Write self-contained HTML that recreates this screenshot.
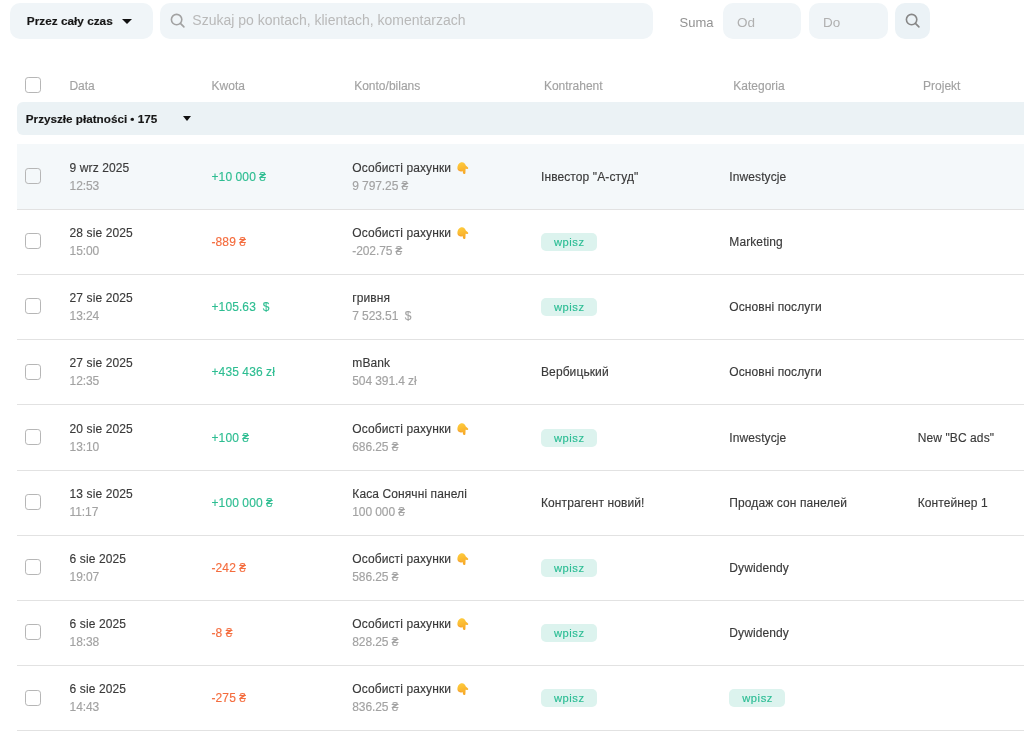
<!DOCTYPE html>
<html><head><meta charset="utf-8">
<style>
html,body{margin:0;padding:0;}
body{width:1024px;height:735px;overflow:hidden;background:#fff;position:relative;font-family:"Liberation Sans",sans-serif;}
#w{position:absolute;left:0;top:0;width:1024px;height:735px;will-change:transform;}
.box{position:absolute;background:#f0f5f8;border-radius:10px;}
.t{position:absolute;white-space:pre;font-size:12px;line-height:14px;color:#3a3a3a;-webkit-text-stroke:0.15px currentColor;letter-spacing:0.1px;}
.s{color:#a2a2a2;letter-spacing:-0.1px;}
.h{color:#a2a2a2;letter-spacing:0;}
.g{color:#2dbd91;}
.r{color:#f46c3d;}
.row{position:absolute;left:17px;width:1100px;}
.sep{position:absolute;left:17px;width:1100px;height:1px;background:#e2e2e2;}
.hl{background:#f4f8fa;}
.cb{position:absolute;left:25px;width:16px;height:16px;box-sizing:border-box;border:1.8px solid #b6b6b6;border-radius:3.2px;background:transparent;}

.chip{position:absolute;height:17.8px;width:56px;box-sizing:border-box;background:#dcf3ee;border-radius:5px;color:#2bbd94;font-size:11.2px;line-height:18.4px;text-align:center;letter-spacing:0.55px;text-indent:0.55px;-webkit-text-stroke:0.15px #2bbd94;}
.hand{position:absolute;margin-left:5.6px;margin-top:1.2px;}
.tri{position:absolute;width:0;height:0;border-left:5px solid transparent;border-right:5px solid transparent;border-top:5px solid #111;}
</style></head><body><svg width="0" height="0" style="position:absolute"><defs><linearGradient id="hg" x1="0" y1="0" x2="0.3" y2="1"><stop offset="0" stop-color="#ffcf3f"/><stop offset="1" stop-color="#f7a928"/></linearGradient></defs></svg><div id="w">
<div class="box" style="left:10px;top:3.2px;width:143px;height:35.6px"></div>
<div class="t" style="left:26.8px;top:14.4px;font-size:11.8px;font-weight:bold;color:#161616;letter-spacing:0">Przez cały czas</div>
<div class="tri" style="left:122.2px;top:19px"></div>
<div class="box" style="left:160px;top:3.2px;width:493px;height:35.6px"></div>
<svg style="position:absolute;left:169.5px;top:13px" width="16" height="16" viewBox="0 0 16 16"><circle cx="6.6" cy="6.6" r="5.2" fill="none" stroke="#a2a2a2" stroke-width="1.6"/><path d="M10.4 10.4 L13.9 13.9" stroke="#a2a2a2" stroke-width="1.65" stroke-linecap="round"/></svg>
<div class="t" style="left:192.3px;top:12.4px;font-size:14px;line-height:16px;color:#b9b9b9;-webkit-text-stroke:0;letter-spacing:0">Szukaj po kontach, klientach, komentarzach</div>
<div class="t" style="left:679.6px;top:15.2px;font-size:13px;line-height:15px;color:#929292;-webkit-text-stroke:0;letter-spacing:0">Suma</div>
<div class="box" style="left:722.7px;top:3.2px;width:78.5px;height:35.6px"></div>
<div class="t" style="left:736.9px;top:15.1px;font-size:13.5px;line-height:15px;color:#b0b0b0;-webkit-text-stroke:0;letter-spacing:0">Od</div>
<div class="box" style="left:809px;top:3.2px;width:79px;height:35.6px"></div>
<div class="t" style="left:822.9px;top:15.1px;font-size:13.5px;line-height:15px;color:#b0b0b0;-webkit-text-stroke:0;letter-spacing:0">Do</div>
<div class="box" style="left:895px;top:3.2px;width:35px;height:35.6px;background:#ebf2f6"></div>
<svg style="position:absolute;left:905px;top:13.3px" width="16" height="16" viewBox="0 0 16 16"><circle cx="6.6" cy="6.6" r="5.2" fill="none" stroke="#878787" stroke-width="1.6"/><path d="M10.4 10.4 L13.9 13.9" stroke="#878787" stroke-width="1.65" stroke-linecap="round"/></svg>
<div class="cb" style="top:77px"></div>
<div class="t h" style="left:69.4px;top:79.4px">Data</div>
<div class="t h" style="left:211.6px;top:79.4px">Kwota</div>
<div class="t h" style="left:354.2px;top:79.4px">Konto/bilans</div>
<div class="t h" style="left:543.9px;top:79.4px">Kontrahent</div>
<div class="t h" style="left:733.3px;top:79.4px">Kategoria</div>
<div class="t h" style="left:923.1px;top:79.4px">Projekt</div>
<div style="position:absolute;left:17px;top:102.2px;width:1100px;height:32.4px;background:#ebf2f5;border-radius:6px"></div>
<div class="t" style="left:25.8px;top:111.8px;font-size:11.7px;font-weight:bold;color:#161616;letter-spacing:0">Przyszłe płatności • 175</div>
<div class="tri" style="left:182.5px;top:116px;border-left-width:4.75px;border-right-width:4.75px"></div>
<div class="row hl" style="top:144px;height:65px"></div>
<div class="sep" style="top:209px"></div>
<div class="cb" style="top:168.0px"></div>
<div class="t" style="left:69.6px;top:161px">9 wrz 2025</div>
<div class="t s" style="left:69.6px;top:179px">12:53</div>
<div class="t g" style="left:211.5px;top:170px">+10 000 ₴</div>
<div class="t" style="left:352.3px;top:161px">Особисті рахунки<svg class="hand" width="13" height="13" viewBox="0 0 13 13"><path d="M0.4 6.4 C0.3 2.6 2.4 0.2 5 0.2 C7 0.2 8.2 1.6 8.8 3.6 L10.8 5.2 C11.5 5.8 11.4 6.9 10.4 6.9 L8.6 6.8 L8.4 11 C8.4 11.8 7.8 12.1 7.2 12.1 C6.5 12.1 6.1 11.7 6 11 L5.7 9.3 C3.2 9.2 0.5 8.6 0.4 6.4 Z" fill="url(#hg)"/><path d="M1 7.6 C1.8 8.6 3.2 9 4.6 9.2" stroke="#f08a2a" stroke-width="0.9" fill="none" opacity="0.7"/></svg></div>
<div class="t s" style="left:352.3px;top:179px">9 797.25 ₴</div>
<div class="t" style="left:541.0px;top:170px">Інвестор &quot;А-студ&quot;</div>
<div class="t" style="left:729.3px;top:170px">Inwestycje</div>
<div class="sep" style="top:274px"></div>
<div class="cb" style="top:233.2px"></div>
<div class="t" style="left:69.6px;top:226px">28 sie 2025</div>
<div class="t s" style="left:69.6px;top:244px">15:00</div>
<div class="t r" style="left:211.5px;top:235px">-889 ₴</div>
<div class="t" style="left:352.3px;top:226px">Особисті рахунки<svg class="hand" width="13" height="13" viewBox="0 0 13 13"><path d="M0.4 6.4 C0.3 2.6 2.4 0.2 5 0.2 C7 0.2 8.2 1.6 8.8 3.6 L10.8 5.2 C11.5 5.8 11.4 6.9 10.4 6.9 L8.6 6.8 L8.4 11 C8.4 11.8 7.8 12.1 7.2 12.1 C6.5 12.1 6.1 11.7 6 11 L5.7 9.3 C3.2 9.2 0.5 8.6 0.4 6.4 Z" fill="url(#hg)"/><path d="M1 7.6 C1.8 8.6 3.2 9 4.6 9.2" stroke="#f08a2a" stroke-width="0.9" fill="none" opacity="0.7"/></svg></div>
<div class="t s" style="left:352.3px;top:244px">-202.75 ₴</div>
<div class="chip" style="left:541.0px;top:233.2px">wpisz</div>
<div class="t" style="left:729.3px;top:235px">Marketing</div>
<div class="sep" style="top:339px"></div>
<div class="cb" style="top:298.4px"></div>
<div class="t" style="left:69.6px;top:291px">27 sie 2025</div>
<div class="t s" style="left:69.6px;top:309px">13:24</div>
<div class="t g" style="left:211.5px;top:300px">+105.63  $</div>
<div class="t" style="left:352.3px;top:291px">гривня</div>
<div class="t s" style="left:352.3px;top:309px">7 523.51  $</div>
<div class="chip" style="left:541.0px;top:298.2px">wpisz</div>
<div class="t" style="left:729.3px;top:300px">Основні послуги</div>
<div class="sep" style="top:404px"></div>
<div class="cb" style="top:363.6px"></div>
<div class="t" style="left:69.6px;top:356px">27 sie 2025</div>
<div class="t s" style="left:69.6px;top:374px">12:35</div>
<div class="t g" style="left:211.5px;top:365px">+435 436 zł</div>
<div class="t" style="left:352.3px;top:356px">mBank</div>
<div class="t s" style="left:352.3px;top:374px">504 391.4 zł</div>
<div class="t" style="left:541.0px;top:365px">Вербицький</div>
<div class="t" style="left:729.3px;top:365px">Основні послуги</div>
<div class="sep" style="top:470px"></div>
<div class="cb" style="top:428.8px"></div>
<div class="t" style="left:69.6px;top:422px">20 sie 2025</div>
<div class="t s" style="left:69.6px;top:440px">13:10</div>
<div class="t g" style="left:211.5px;top:431px">+100 ₴</div>
<div class="t" style="left:352.3px;top:422px">Особисті рахунки<svg class="hand" width="13" height="13" viewBox="0 0 13 13"><path d="M0.4 6.4 C0.3 2.6 2.4 0.2 5 0.2 C7 0.2 8.2 1.6 8.8 3.6 L10.8 5.2 C11.5 5.8 11.4 6.9 10.4 6.9 L8.6 6.8 L8.4 11 C8.4 11.8 7.8 12.1 7.2 12.1 C6.5 12.1 6.1 11.7 6 11 L5.7 9.3 C3.2 9.2 0.5 8.6 0.4 6.4 Z" fill="url(#hg)"/><path d="M1 7.6 C1.8 8.6 3.2 9 4.6 9.2" stroke="#f08a2a" stroke-width="0.9" fill="none" opacity="0.7"/></svg></div>
<div class="t s" style="left:352.3px;top:440px">686.25 ₴</div>
<div class="chip" style="left:541.0px;top:429.2px">wpisz</div>
<div class="t" style="left:729.3px;top:431px">Inwestycje</div>
<div class="t" style="left:917.7px;top:431px">New &quot;BC ads&quot;</div>
<div class="sep" style="top:535px"></div>
<div class="cb" style="top:494.0px"></div>
<div class="t" style="left:69.6px;top:487px">13 sie 2025</div>
<div class="t s" style="left:69.6px;top:505px">11:17</div>
<div class="t g" style="left:211.5px;top:496px">+100 000 ₴</div>
<div class="t" style="left:352.3px;top:487px">Каса Сонячні панелі</div>
<div class="t s" style="left:352.3px;top:505px">100 000 ₴</div>
<div class="t" style="left:541.0px;top:496px">Контрагент новий!</div>
<div class="t" style="left:729.3px;top:496px">Продаж сон панелей</div>
<div class="t" style="left:917.7px;top:496px">Контейнер 1</div>
<div class="sep" style="top:600px"></div>
<div class="cb" style="top:559.2px"></div>
<div class="t" style="left:69.6px;top:552px">6 sie 2025</div>
<div class="t s" style="left:69.6px;top:570px">19:07</div>
<div class="t r" style="left:211.5px;top:561px">-242 ₴</div>
<div class="t" style="left:352.3px;top:552px">Особисті рахунки<svg class="hand" width="13" height="13" viewBox="0 0 13 13"><path d="M0.4 6.4 C0.3 2.6 2.4 0.2 5 0.2 C7 0.2 8.2 1.6 8.8 3.6 L10.8 5.2 C11.5 5.8 11.4 6.9 10.4 6.9 L8.6 6.8 L8.4 11 C8.4 11.8 7.8 12.1 7.2 12.1 C6.5 12.1 6.1 11.7 6 11 L5.7 9.3 C3.2 9.2 0.5 8.6 0.4 6.4 Z" fill="url(#hg)"/><path d="M1 7.6 C1.8 8.6 3.2 9 4.6 9.2" stroke="#f08a2a" stroke-width="0.9" fill="none" opacity="0.7"/></svg></div>
<div class="t s" style="left:352.3px;top:570px">586.25 ₴</div>
<div class="chip" style="left:541.0px;top:559.2px">wpisz</div>
<div class="t" style="left:729.3px;top:561px">Dywidendy</div>
<div class="sep" style="top:665px"></div>
<div class="cb" style="top:624.4px"></div>
<div class="t" style="left:69.6px;top:617px">6 sie 2025</div>
<div class="t s" style="left:69.6px;top:635px">18:38</div>
<div class="t r" style="left:211.5px;top:626px">-8 ₴</div>
<div class="t" style="left:352.3px;top:617px">Особисті рахунки<svg class="hand" width="13" height="13" viewBox="0 0 13 13"><path d="M0.4 6.4 C0.3 2.6 2.4 0.2 5 0.2 C7 0.2 8.2 1.6 8.8 3.6 L10.8 5.2 C11.5 5.8 11.4 6.9 10.4 6.9 L8.6 6.8 L8.4 11 C8.4 11.8 7.8 12.1 7.2 12.1 C6.5 12.1 6.1 11.7 6 11 L5.7 9.3 C3.2 9.2 0.5 8.6 0.4 6.4 Z" fill="url(#hg)"/><path d="M1 7.6 C1.8 8.6 3.2 9 4.6 9.2" stroke="#f08a2a" stroke-width="0.9" fill="none" opacity="0.7"/></svg></div>
<div class="t s" style="left:352.3px;top:635px">828.25 ₴</div>
<div class="chip" style="left:541.0px;top:624.2px">wpisz</div>
<div class="t" style="left:729.3px;top:626px">Dywidendy</div>
<div class="sep" style="top:730px"></div>
<div class="cb" style="top:689.6px"></div>
<div class="t" style="left:69.6px;top:682px">6 sie 2025</div>
<div class="t s" style="left:69.6px;top:700px">14:43</div>
<div class="t r" style="left:211.5px;top:691px">-275 ₴</div>
<div class="t" style="left:352.3px;top:682px">Особисті рахунки<svg class="hand" width="13" height="13" viewBox="0 0 13 13"><path d="M0.4 6.4 C0.3 2.6 2.4 0.2 5 0.2 C7 0.2 8.2 1.6 8.8 3.6 L10.8 5.2 C11.5 5.8 11.4 6.9 10.4 6.9 L8.6 6.8 L8.4 11 C8.4 11.8 7.8 12.1 7.2 12.1 C6.5 12.1 6.1 11.7 6 11 L5.7 9.3 C3.2 9.2 0.5 8.6 0.4 6.4 Z" fill="url(#hg)"/><path d="M1 7.6 C1.8 8.6 3.2 9 4.6 9.2" stroke="#f08a2a" stroke-width="0.9" fill="none" opacity="0.7"/></svg></div>
<div class="t s" style="left:352.3px;top:700px">836.25 ₴</div>
<div class="chip" style="left:541.0px;top:689.2px">wpisz</div>
<div class="chip" style="left:729.3px;top:689.2px">wpisz</div>
</div></body></html>
